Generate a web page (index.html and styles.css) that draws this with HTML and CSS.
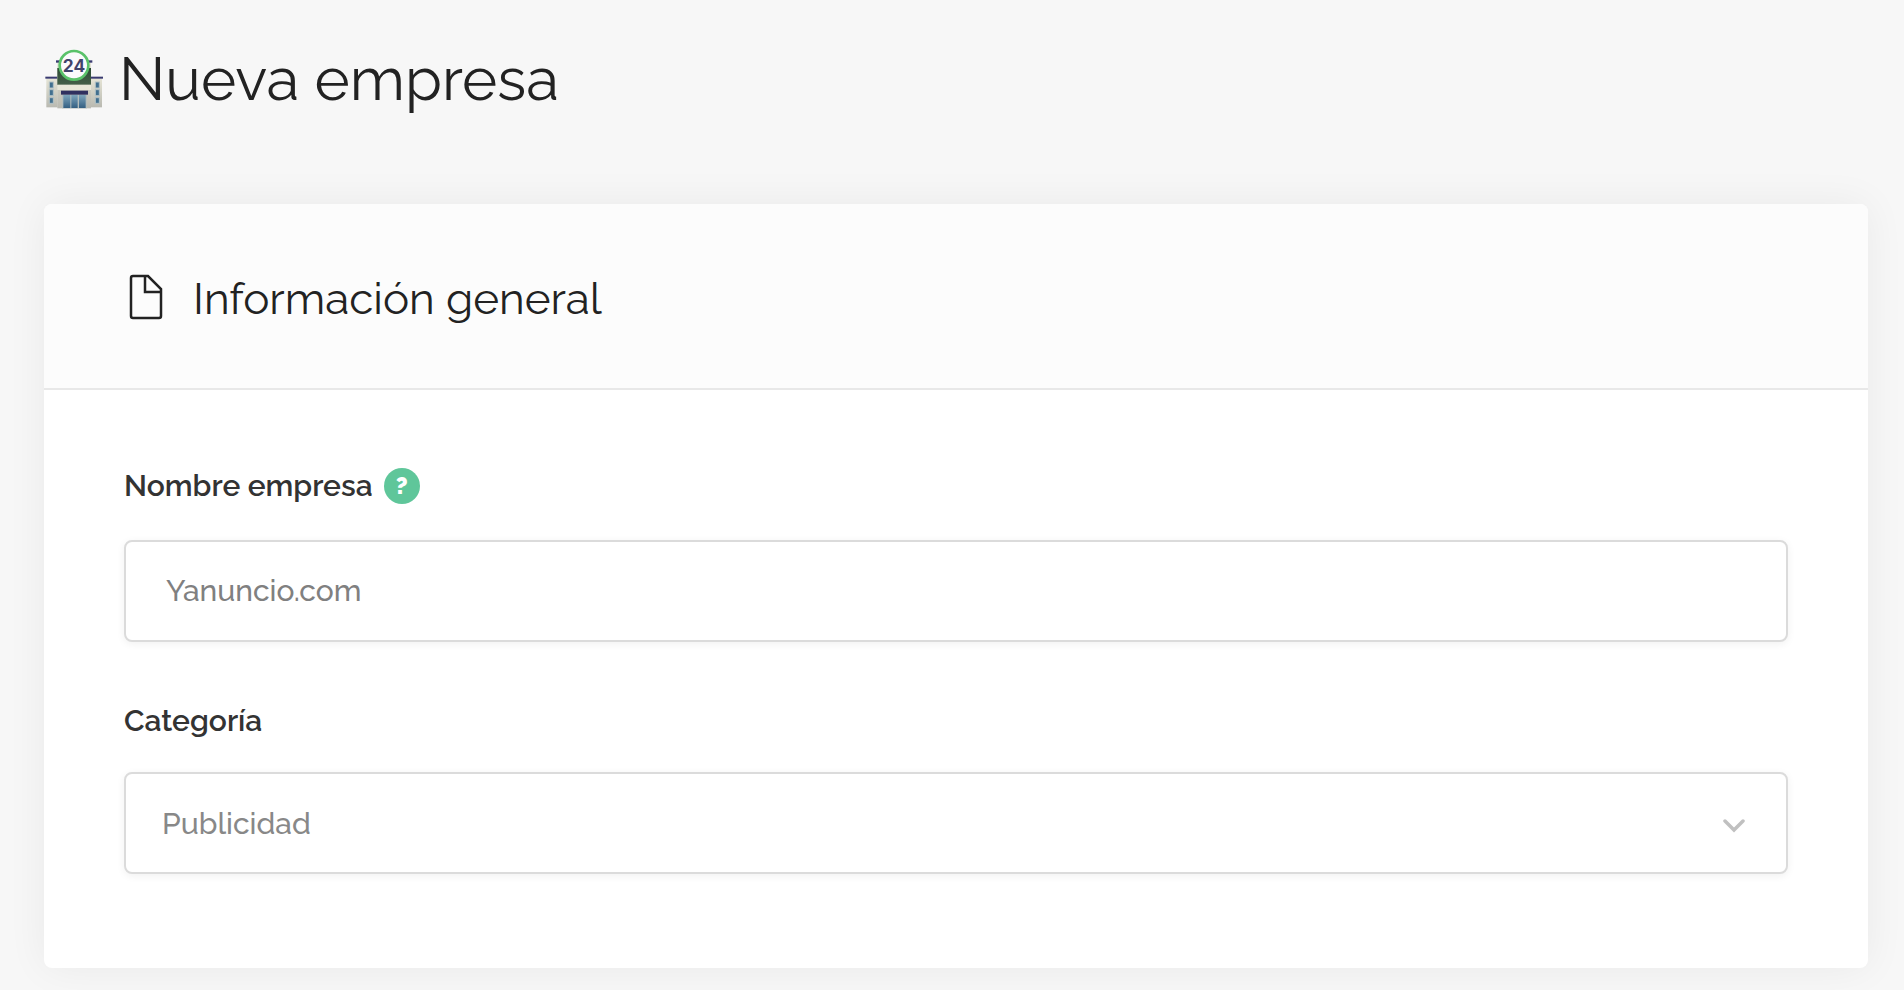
FILE: index.html
```html
<!DOCTYPE html>
<html lang="es">
<head>
  <meta charset="UTF-8" />
  <meta name="viewport" content="width=device-width, initial-scale=1" />
  <title>Nueva empresa</title>
  <link rel="stylesheet" href="styles.css">
</head>
<body>
  <main class="page">
    <h1 class="page-title">
      <svg class="store-icon" viewBox="45 40 174 180" aria-hidden="true">
        <defs>
          <linearGradient id="wall" x1="0" y1="0" x2="0" y2="1">
            <stop offset="0" stop-color="#e6e5d6" />
            <stop offset="1" stop-color="#b9b9b1" />
          </linearGradient>
          <linearGradient id="glass" x1="0" y1="0" x2="0" y2="1">
            <stop offset="0" stop-color="#7fa6bd" />
            <stop offset="1" stop-color="#345f82" />
          </linearGradient>
          <linearGradient id="front" x1="0" y1="0" x2="0" y2="1">
            <stop offset="0" stop-color="#2c4a34" />
            <stop offset="1" stop-color="#45604a" />
          </linearGradient>
        </defs>
        <!-- alas laterales -->
        <rect x="49" y="128" width="34" height="87" fill="url(#wall)" />
        <rect x="182" y="128" width="34" height="87" fill="url(#wall)" />
        <rect x="46" y="123" width="37" height="6" fill="#393a70" />
        <rect x="182" y="123" width="37" height="6" fill="#393a70" />
        <g fill="#42708f" stroke="#b3c2c6" stroke-width="3">
          <rect x="58" y="139" width="12" height="18" />
          <rect x="58" y="162" width="12" height="18" />
          <rect x="58" y="186" width="12" height="17" />
          <rect x="196" y="139" width="12" height="18" />
          <rect x="196" y="162" width="12" height="18" />
          <rect x="196" y="186" width="12" height="17" />
        </g>
        <!-- edificio central -->
        <rect x="82" y="78" width="101" height="140" fill="url(#wall)" />
        <rect x="78" y="74" width="109" height="7" fill="#393a70" />
        <rect x="82" y="97" width="101" height="51" fill="url(#front)" />
        <rect x="82" y="147" width="101" height="16" fill="#e9e8da" />
        <rect x="96" y="177" width="75" height="41" fill="#b4bdbc" />
        <rect x="100" y="177" width="21" height="40" fill="url(#glass)" />
        <rect x="124" y="177" width="19" height="40" fill="url(#glass)" />
        <rect x="147" y="177" width="20" height="40" fill="url(#glass)" />
        <rect x="93" y="165" width="81" height="12" fill="#30305f" />
        <!-- rótulo 24 h -->
        <circle cx="132" cy="89" r="43" fill="#fbfafc" stroke="#5ac26a" stroke-width="8" />
        <text class="store-number" x="132" y="108" text-anchor="middle">24</text>
      </svg>
      Nueva empresa
    </h1>

    <form class="card">
      <div class="card-header">
        <svg class="file-icon" viewBox="0 0 32 44" aria-hidden="true">
          <path d="M3 1H18L31 14V41Q31 43 29 43H3Q1 43 1 41V3Q1 1 3 1Z M15 1V17H31" />
        </svg>
        <h2>Información general</h2>
      </div>

      <div class="card-body">
        <div class="field">
          <div class="field-label">
            <label for="nombre">Nombre empresa</label>
            <button type="button" class="help" aria-label="Ayuda">?</button>
          </div>
          <input type="text" id="nombre" name="nombre" value="Yanuncio.com">
        </div>

        <div class="field">
          <div class="field-label">
            <label for="categoria">Categoría</label>
          </div>
          <div class="select-wrapper">
            <select id="categoria" name="categoria">
              <option>Publicidad</option>
            </select>
            <svg class="chevron" viewBox="0 0 22 14" aria-hidden="true">
              <path d="M2 2L11 11L20 2" />
            </svg>
          </div>
        </div>
      </div>
    </form>
  </main>
</body>
</html>
```
FILE: styles.css
```css
* {
  box-sizing: border-box;
}
body {
  margin: 0;
  background-color: #f7f7f7;
  color: #222;
  font-family: "Raleway", "Lato", sans-serif;
}
.page {
  padding: 39px 36px 22px 44px;
}

/* ---------- Título ---------- */
.page-title {
  display: flex;
  align-items: center;
  gap: 15px;
  margin: 0 0 85px;
  font-size: 60px;
  line-height: 80px;
  font-weight: 400;
}
.store-icon {
  width: 60px;
  height: 60px;
}
.store-number {
  font-family: "Inter", sans-serif;
  font-size: 52px;
  font-weight: 700;
  fill: #41436b;
}

/* ---------- Tarjeta ---------- */
.card {
  background-color: #fff;
  border-radius: 8px;
  box-shadow: 0 0 40px rgba(0, 0, 0, 0.06);
}
.card-header {
  display: flex;
  align-items: center;
  gap: 31px;
  padding: 66px 80px 60px 86px;
  background-color: #fcfcfc;
  border-bottom: 2px solid #e8e8e8;
  border-radius: 8px 8px 0 0;
}
.card-header h2 {
  margin: 0;
  font-size: 44px;
  line-height: 58px;
  font-weight: 400;
}
.file-icon {
  width: 32px;
  height: 44px;
  margin-bottom: 4px;
  overflow: visible;
  fill: none;
  stroke: #222;
  stroke-width: 2.5;
}
.card-body {
  padding: 75px 80px 94px;
}

/* ---------- Campos ---------- */
.field + .field {
  margin-top: 61px;
}
.field-label {
  display: flex;
  align-items: center;
  gap: 11px;
  margin-bottom: 33px;
  color: #333;
  font-size: 30px;
  line-height: 36px;
  font-weight: 600;
}
.help {
  width: 36px;
  height: 36px;
  margin: 3px 0;
  padding: 0;
  border: none;
  border-radius: 50%;
  background-color: #5fc69a;
  color: #fff;
  font-family: inherit;
  font-size: 24px;
  line-height: 36px;
  font-weight: 900;
  cursor: pointer;
}
input[type="text"],
select {
  display: block;
  width: 100%;
  height: 102px;
  padding: 0 40px;
  border: 2px solid #dbdbdb;
  border-radius: 8px;
  background-color: #fff;
  box-shadow: 0 2px 8px rgba(0, 0, 0, 0.06);
  color: #808080;
  font-family: inherit;
  font-size: 30px;
  font-weight: 500;
}
input[type="text"] {
  padding-bottom: 2px;
}
select {
  appearance: none;
  padding: 0 80px 0 36px;
  color: #888;
}
.select-wrapper {
  position: relative;
}
.chevron {
  position: absolute;
  top: 47px;
  right: 43px;
  width: 22px;
  height: 14px;
  fill: none;
  stroke: #c0c0c0;
  stroke-width: 3.5;
  stroke-linecap: round;
  pointer-events: none;
}
```
